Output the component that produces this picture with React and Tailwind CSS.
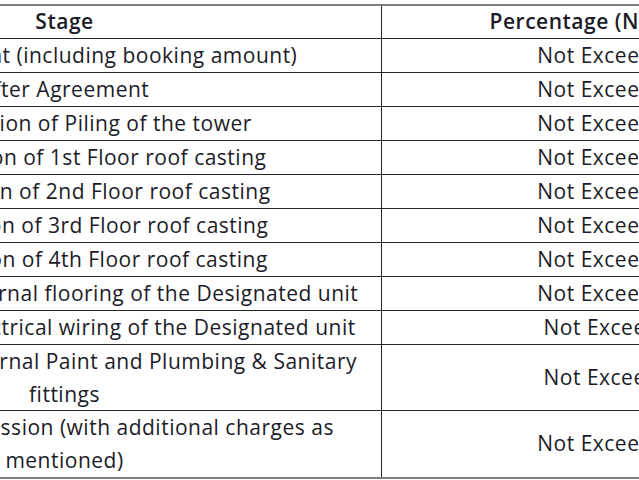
import React from "react";

const stages = [
  { stage: "Booking Payment (including booking amount)", pct: "Not Exceeding 10%" },
  { stage: "After Agreement", pct: "Not Exceeding 10%" },
  { stage: "On Completion of Piling of the tower", pct: "Not Exceeding 10%" },
  { stage: "On Completion of 1st Floor roof casting", pct: "Not Exceeding 10%" },
  { stage: "On Completion of 2nd Floor roof casting", pct: "Not Exceeding 10%" },
  { stage: "On Completion of 3rd Floor roof casting", pct: "Not Exceeding 10%" },
  { stage: "On Completion of 4th Floor roof casting", pct: "Not Exceeding 10%" },
  { stage: "On Completion of Internal flooring of the Designated unit", pct: "Not Exceeding 10%" },
  { stage: "On Completion of Electrical wiring of the Designated unit", pct: "Not Exceeding 5%" },
  {
    stage: ["On Completion of Internal Paint and Plumbing & Sanitary", "fittings"],
    pct: "Not Exceeding 5%",
  },
  {
    stage: ["At the time of Possession (with additional charges as", "mentioned)"],
    pct: "Not Exceeding 10%",
  },
];

const PaymentPlan = () => {
  return (
    <div className="w-[639px] h-[480px] overflow-hidden bg-white">
      <div className="ml-[-252px] mt-[4px] w-[1140px] border-t-2 border-b-2 border-[#7d7d7d] font-['Open_Sans',sans-serif] text-[21px] tracking-[0.5px] text-[#1c1c28]">
        {/* header */}
        <div className="flex h-[33px] border-b border-[#262626] font-semibold">
          <div className="w-[634px] border-r border-[#262626] flex items-center justify-center">
            Stage
          </div>
          <div className="flex-1 flex items-center justify-center">
            Percentage (Not Exceeding)
          </div>
        </div>

        {stages.map((row, i) => {
          const twoLines = Array.isArray(row.stage);
          const last = i === stages.length - 1;
          return (
            <div
              key={i}
              className={`flex ${twoLines ? "h-[66px]" : "h-[34px]"} ${
                last ? "" : "border-b border-[#262626]"
              }`}
            >
              <div className="w-[634px] border-r border-[#262626] flex flex-col items-center justify-center text-center leading-[33px]">
                {twoLines ? (
                  <>
                    <span className="whitespace-nowrap">{row.stage[0]}</span>
                    <span>{row.stage[1]}</span>
                  </>
                ) : (
                  <span className="whitespace-nowrap">{row.stage}</span>
                )}
              </div>
              <div className="flex-1 flex items-center justify-center">{row.pct}</div>
            </div>
          );
        })}
      </div>
    </div>
  );
};

export default PaymentPlan;
